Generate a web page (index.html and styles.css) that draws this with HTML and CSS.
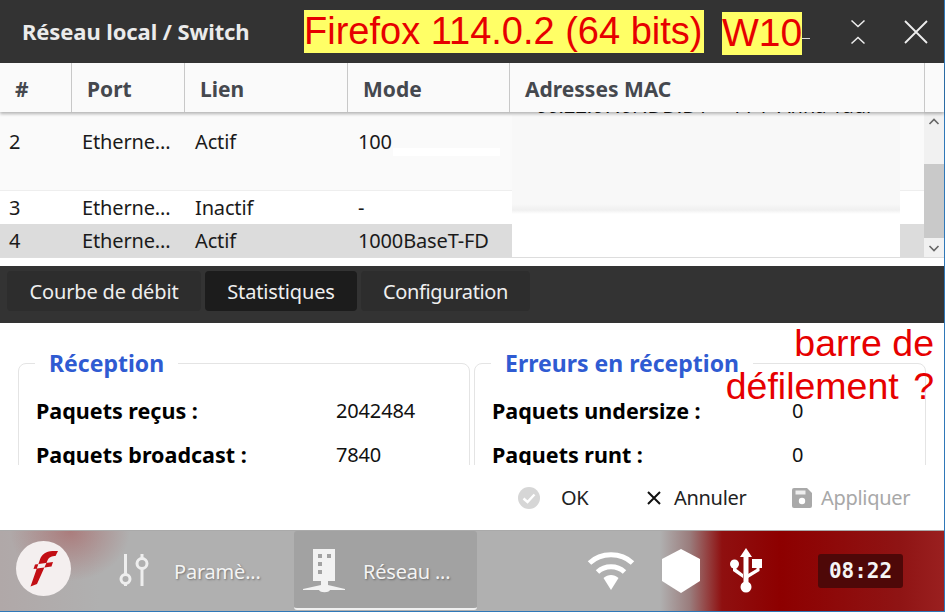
FILE: index.html
```html
<!DOCTYPE html>
<html lang="fr">
<head>
<meta charset="utf-8">
<title>Réseau local / Switch</title>
<link rel="stylesheet" href="styles.css">
</head>
<body>
<div class="app">
  <header class="titlebar">
    <h1 class="title">Réseau local / Switch</h1>
    <div class="winctl">
      <span class="minus"></span>
      <svg class="ic-restore" width="16" height="26" viewBox="0 0 16 26"><path d="M1.500 1.500 8 7.500 14.500 1.500M1.500 24.500 8 18.500 14.500 24.500" fill="none" stroke="#eee" stroke-width="1.500"/></svg>
      <svg class="ic-close" width="24" height="24" viewBox="0 0 24 24"><path d="M1 1 23 23M23 1 1 23" fill="none" stroke="#eee" stroke-width="1.800"/></svg>
    </div>
  </header>

  <section class="table">
    <div class="thead">
      <div class="th c1">#</div>
      <div class="th c2">Port</div>
      <div class="th c3">Lien</div>
      <div class="th c4">Mode</div>
      <div class="th c5">Adresses MAC</div>
      <div class="th c6"></div>
    </div>
    <div class="tbody-wrap">
      <div class="rows">
        <div class="row tall"><div class="td d1">2</div><div class="td d2">Etherne...</div><div class="td d3">Actif</div><div class="td d4">100</div></div>
        <div class="row"><div class="td d1">3</div><div class="td d2">Etherne...</div><div class="td d3">Inactif</div><div class="td d4">-</div></div>
        <div class="row sel"><div class="td d1">4</div><div class="td d2">Etherne...</div><div class="td d3">Actif</div><div class="td d4">1000BaseT-FD</div></div>
        <div class="mac-clip"><span class="mac">• 00:22:07:0F:DD:D1 - 11 / Anna radio</span></div>
        <div class="ghost"></div>
        <div class="ghost-line"></div>
      </div>
      <div class="scrollbar">
        <svg class="arrow" width="20" height="20" viewBox="0 0 20 20"><path d="M5.500 12 10 7.500 14.500 12" fill="none" stroke="#666" stroke-width="1.600"/></svg>
        <div class="track"><div class="thumb"></div></div>
        <svg class="arrow" width="20" height="20" viewBox="0 0 20 20"><path d="M5.500 8 10 12.500 14.500 8" fill="none" stroke="#666" stroke-width="1.600"/></svg>
      </div>
    </div>
  </section>

  <nav class="tabs">
    <button class="tab tab-a">Courbe de débit</button>
    <button class="tab tab-b active">Statistiques</button>
    <button class="tab tab-c">Configuration</button>
  </nav>

  <section class="stats">
    <fieldset class="group">
      <legend>Réception</legend>
      <div class="stat"><b>Paquets reçus :</b><span>2042484</span></div>
      <div class="stat"><b>Paquets broadcast :</b><span>7840</span></div>
    </fieldset>
    <fieldset class="group">
      <legend>Erreurs en réception</legend>
      <div class="stat"><b>Paquets undersize :</b><span>0</span></div>
      <div class="stat"><b>Paquets runt :</b><span>0</span></div>
    </fieldset>
  </section>

  <div class="actions">
    <button class="act act-ok">
      <svg width="22" height="22" viewBox="0 0 22 22"><circle cx="11" cy="11" r="11" fill="#d6d6d6"/><path d="M5.500 11.500 9.500 15 16.500 7.500" fill="none" stroke="#fff" stroke-width="2.400"/></svg>
      <span>OK</span>
    </button>
    <button class="act act-cancel">
      <svg width="16" height="16" viewBox="0 0 16 16"><path d="M2 2 14 14M14 2 2 14" fill="none" stroke="#111" stroke-width="2"/></svg>
      <span>Annuler</span>
    </button>
    <button class="act act-apply">
      <svg width="20" height="20" viewBox="0 0 20 20"><path d="M2 0H15L20 5V18a2 2 0 0 1-2 2H2a2 2 0 0 1-2-2V2a2 2 0 0 1 2-2Z" fill="#a9a9a9"/><rect x="3.500" y="2.500" width="10" height="4" fill="#eee"/><circle cx="10" cy="13" r="3.200" fill="#fff"/></svg>
      <span>Appliquer</span>
    </button>
  </div>

  <footer class="taskbar">
    <svg class="logo" width="55" height="55" viewBox="0 0 55 55"><circle cx="27.500" cy="27.500" r="27.500" fill="#f4efef"/><path fill="#c20e14" d="M42 10C33 9.500 27.500 11 24.500 17L14.500 45.500 21 43 31.500 19.500C33 16 36 15 39.500 15ZM19 23.500 37 21 35.500 25.500 17.500 28Z"/></svg>
    <div class="task task-params">
      <svg width="34" height="36" viewBox="0 0 34 36"><g fill="none" stroke="#eee" stroke-width="3"><path d="M7.500 1V21M7.500 31V33"/><circle cx="7.500" cy="26" r="4.500"/><path d="M24 1V5M24 16V33"/><circle cx="24" cy="10.500" r="5"/></g></svg>
      <span>Paramè...</span>
    </div>
    <div class="task task-net">
      <svg width="44" height="46" viewBox="0 0 44 46"><path fill="#f2f2f2" fill-rule="evenodd" d="M10 1H32V33H25V37L42 41V42H27C26 45 17 45 16 42H0V41L18 37V33H10ZM15 6V10H19V6ZM24 6V10H28V6ZM15 14V18H19V14ZM15 22V26H19V22Z"/></svg>
      <span>Réseau ...</span>
    </div>
    <div class="tray">
      <svg width="48" height="40" viewBox="0 0 48 40"><g fill="none" stroke="#fff" stroke-width="5"><path d="M2.500 12C14 1 34 1 45.500 12"/><path d="M10.500 21C18 14 30 14 37.500 21"/></g><path fill="#fff" d="M16.500 27C21 23 27 23 31.500 27L24 39Z"/></svg>
      <svg width="40" height="44" viewBox="0 0 40 44"><path fill="#fff" d="M20 0 39 10V32L20 44 1 32V10Z"/></svg>
      <svg width="32" height="46" viewBox="0 0 32 46"><g fill="#fff"><path d="M16 0 22 9H18.500V36H13.500V9H10Z"/><circle cx="16" cy="39" r="5.500"/><circle cx="4.500" cy="16" r="4.500"/><path d="M3 17H6.500V21L13 26V30L3 23ZM22 11H32V20H29.500V23L18 30V26L26.500 21V20H22Z"/></g></svg>
    </div>
    <time class="clock">08:22</time>
  </footer>
</div>

<div class="note note-ff">Firefox 114.0.2 (64 bits)</div>
<div class="note note-w10">W10</div>
<div class="note-red">barre de<br><span class="wide">défilement ?</span></div>
</body>
</html>
```
FILE: styles.css
```css
* { box-sizing: border-box; }
html, body { margin: 0; padding: 0; }
body {
  width: 945px;
  height: 612px;
  overflow: hidden;
  position: relative;
  background: #fff;
  font-family: "Noto Sans", "Open Sans", sans-serif;
  color: #111;
}
.app {
  display: flex;
  flex-direction: column;
  height: 612px;
  border-right: 1px solid #2f78b8;
  border-bottom: 1px solid #2f78b8;
}

/* Title bar */
.titlebar {
  height: 63px;
  flex: none;
  background: #333;
  display: flex;
  align-items: center;
  justify-content: space-between;
  padding-left: 22px;
}
.title {
  margin: 0 0 2px;
  font-size: 22px;
  font-weight: 700;
  color: #ebebeb;
  letter-spacing: -.1px;
}
.winctl { display: flex; align-items: center; padding-right: 16px; }
.minus { width: 8px; height: 1px; background: #ddd; margin-right: 40px; margin-top: 14px; }
.ic-restore { margin-right: 38px; }

/* Table */
.table { flex: none; height: 195px; background: #fff; position: relative; }
.thead {
  display: flex;
  height: 49px;
  background: #fafafa;
  box-shadow: 0 2px 3px rgba(0,0,0,.28);
  position: relative;
  z-index: 3;
}
.th {
  font-size: 21px;
  font-weight: 700;
  color: #45484e;
  line-height: 53px;
  border-right: 1px solid #c8c8c8;
  white-space: nowrap;
}
.c1 { width: 72px; padding-left: 15px; }
.c2 { width: 113px; padding-left: 15px; }
.c3 { width: 163px; padding-left: 15px; }
.c4 { width: 162px; padding-left: 15px; }
.c5 { width: 415px; padding-left: 15px; }
.c6 { flex: 1; border-right: 0; }
.tbody-wrap { display: flex; height: 146px; border-bottom: 1px solid #ddd; }
.rows { width: 925px; position: relative; overflow: hidden; }
.row {
  display: flex;
  height: 34px;
  font-size: 20px;
  line-height: 33px;
  color: #1a1a1a;
  border-top: 1px solid #eee;
  background: #fff;
}
.row.tall { height: 78px; background: #fafafa; border-top: 0; line-height: 60px; }
.row.sel { background: #dcdcdc; border-top: 0; }
.td { white-space: nowrap; letter-spacing: -.15px; }
.d1 { width: 82px; padding-left: 9px; }
.d2 { width: 113px; }
.d3 { width: 163px; }
.d4 { flex: 1; }
.mac-clip { position: absolute; left: 520px; top: 0; height: 3px; width: 354px; overflow: hidden; z-index: 2; }
.mac { position: absolute; top: -16px; left: 0; font: 20px/20px "Noto Sans", sans-serif; word-spacing: 3px; white-space: nowrap; }
.ghost {
  position: absolute; left: 512px; top: 3px; width: 388px; height: 143px;
  background: linear-gradient(#f8f8f8 0, #f8f8f8 89px, #f0f0f0 95px, #fff 99px);
}
.ghost-line { position: absolute; left: 393px; top: 36px; width: 107px; height: 8px; background: #fff; }
.scrollbar { width: 20px; display: flex; flex-direction: column; background: #f1f1f1; }
.arrow { flex: none; }
.track { flex: 1; padding-top: 32px; }
.thumb { height: 74px; background: #c9c9c9; }

/* Tabs */
.tabs {
  margin-top: 8px;
  flex: none;
  height: 57px;
  background: #333;
  display: flex;
  gap: 4px;
  padding: 5px 0 0 7px;
  align-items: flex-start;
}
.tab {
  height: 40px;
  padding: 0;
  border: 0;
  border-radius: 4px;
  background: #2d2d2d;
  color: #efefef;
  font: 20px/42px "Noto Sans", sans-serif;
  letter-spacing: -.15px;
}
.tab-a { width: 194px; }
.tab-b { width: 152px; }
.tab-c { width: 169px; letter-spacing: -.35px; }
.tab.active { background: #1c1c1c; }

/* Statistics */
.stats {
  flex: none;
  height: 142px;
  overflow: hidden;
  display: flex;
  gap: 4px;
  padding: 27px 0 0 18px;
}
.group {
  width: 452px;
  height: 200px;
  margin: 0;
  padding: 15px 0 0 17px;
  border: 1px solid #e4e4e4;
  border-radius: 8px;
  min-width: 0;
}
.group legend {
  margin-left: -1px;
  padding: 0 14px;
  font-size: 23px;
  line-height: 26px;
  font-weight: 700;
  color: #2f5bd2;
  letter-spacing: 0;
  white-space: nowrap;
}
.stat { display: flex; height: 44px; font-size: 21.500px; line-height: 30px; padding-top: 5px; }
.stat b { width: 300px; color: #000; font-weight: 700; white-space: nowrap; }
.stat span { font-size: 20px; letter-spacing: -.15px; }

/* Actions */
.actions {
  flex: none;
  height: 65px;
  display: flex;
  align-items: center;
  padding: 0 0 0 518px;
}
.act {
  display: flex;
  align-items: center;
  border: 0;
  background: none;
  padding: 0;
  font: 20px/28px "Noto Sans", sans-serif;
  letter-spacing: -.3px;
  color: #222;
}
.act-ok { width: 128px; gap: 21px; }
.act-cancel { width: 146px; gap: 12px; }
.act-apply { gap: 9px; color: #a8a8a8; }

/* Taskbar */
.taskbar {
  flex: 1;
  display: flex;
  align-items: center;
  border-top: 1px solid #aaa;
  background:
    radial-gradient(60px 50px at 70px 0, rgba(165,75,75,.5), rgba(165,75,75,0)),
    linear-gradient(90deg, #b0a8a8 0, #b0b0b0 100px, #b0b0b0 660px, #9a7c7c 690px, #8f1010 722px, #8d0000 780px, #8f1414 900px, #9a2020 945px);
  position: relative;
}
.logo {
  margin: -5px 0 0 16px;
  flex: none;
}
.task {
  display: flex;
  align-items: center;
  height: 79px;
  color: #f4f4f4;
  font-size: 20px;
  letter-spacing: -.2px;
  text-shadow: 1px 1px 2px rgba(0,0,0,.35);
  flex: none;
}
.task-params { width: 176px; margin-left: 47px; gap: 22px; }
.task-net {
  width: 183px;
  background: #a2a2a2;
  border-bottom: 2px solid #f0f0f0;
  border-radius: 3px;
  padding: 3px 0 0 9px;
  gap: 16px;
  margin-top: -1px;
}
.tray { display: flex; align-items: center; margin-left: 110px; flex: none; }
.tray svg:nth-child(2) { margin: 0 29px 0 26px; }
.clock {
  margin-left: 56px;
  width: 85px; height: 34px;
  background: #4e0808;
  border-radius: 3px;
  color: #f5f5f5;
  font: 700 21px/34px "DejaVu Sans Mono", monospace;
  text-align: center;
  flex: none;
}

/* Annotations pasted over the shot */
.note {
  position: absolute;
  background: #ffff66;
  color: #e60000;
  font-family: "Liberation Sans", sans-serif;
  font-size: 38px;
  white-space: nowrap;
}
.note-ff { left: 304px; top: 10px; width: 400px; height: 43px; line-height: 43px; }
.note-w10 { left: 722px; top: 12px; width: 80px; height: 43px; line-height: 41px; font-size: 39px; }
.note-red {
  position: absolute;
  right: 11px;
  top: 322px;
  width: 260px;
  text-align: right;
  color: #e60000;
  font: 37.500px/43px "Liberation Sans", sans-serif;
}
.wide { word-spacing: 4px; }
```
